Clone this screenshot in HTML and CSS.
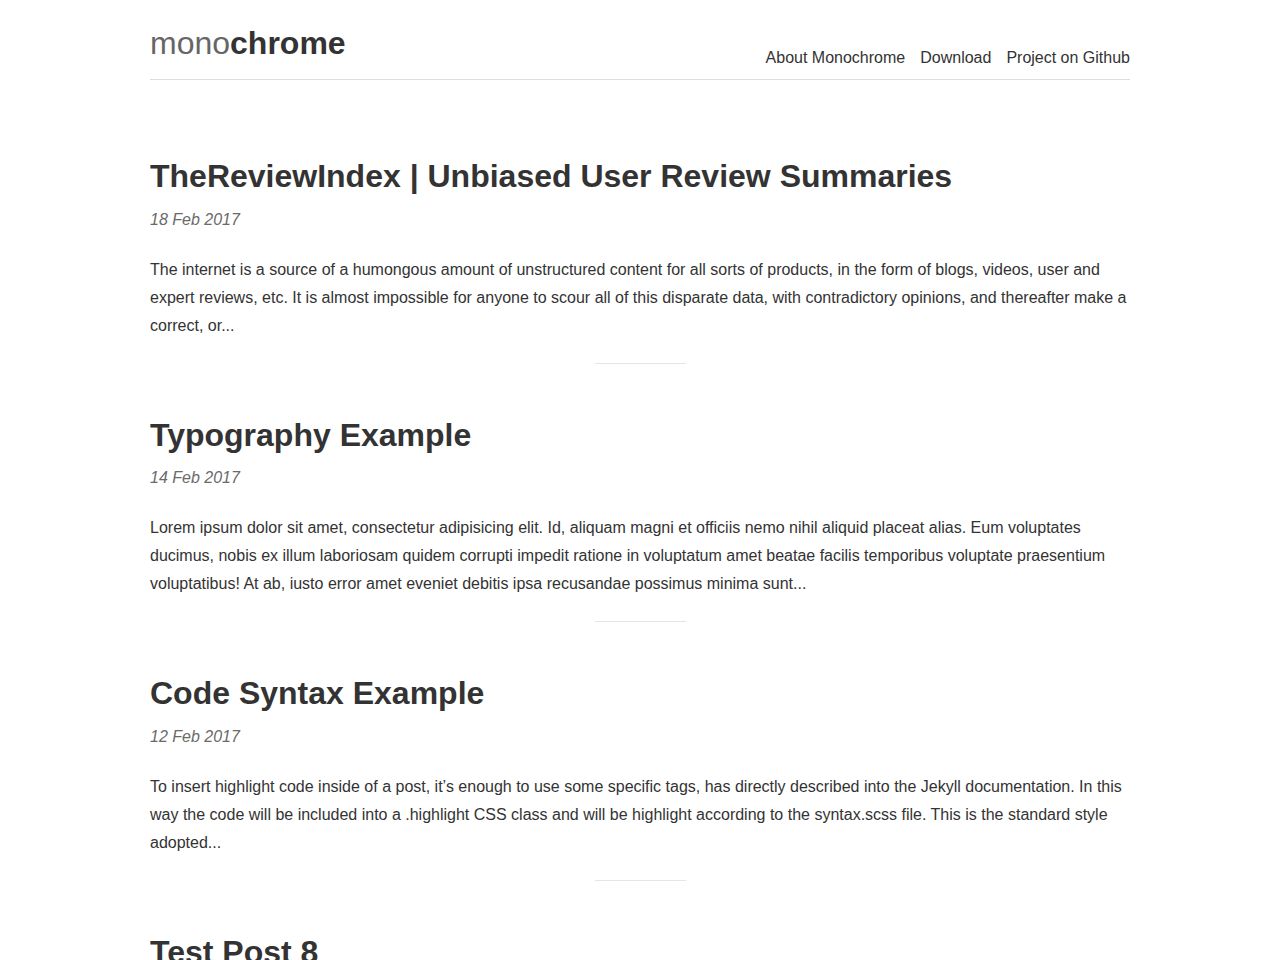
FILE: index.html
```html
<!DOCTYPE html>
<html lang="en">
<head>
<meta charset="utf-8">
<title>monochrome</title>
<link rel="stylesheet" href="styles.css">
</head>
<body>
<div class="wrap">
  <header class="site-header">
    <a class="logo" href="#"><span class="logo-light">mono</span><span class="logo-bold">chrome</span></a>
    <nav class="nav">
      <a href="#">About Monochrome</a>
      <a href="#">Download</a>
      <a href="#">Project on Github</a>
    </nav>
  </header>

  <main class="posts">
    <article class="post">
      <h1 class="post-title"><a href="#">TheReviewIndex | Unbiased User Review Summaries</a></h1>
      <div class="post-date">18 Feb 2017</div>
      <p class="post-excerpt">The internet is a source of a humongous amount of unstructured content for all sorts of products, in the form of blogs, videos, user and expert reviews, etc. It is almost impossible for anyone to scour all of this disparate data, with contradictory opinions, and thereafter make a correct, or...</p>
      <hr class="sep">
    </article>

    <article class="post">
      <h1 class="post-title"><a href="#">Typography Example</a></h1>
      <div class="post-date">14 Feb 2017</div>
      <p class="post-excerpt">Lorem ipsum dolor sit amet, consectetur adipisicing elit. Id, aliquam magni et officiis nemo nihil aliquid placeat alias. Eum voluptates ducimus, nobis ex illum laboriosam quidem corrupti impedit ratione in voluptatum amet beatae facilis temporibus voluptate praesentium voluptatibus! At ab, iusto error amet eveniet debitis ipsa recusandae possimus minima sunt...</p>
      <hr class="sep">
    </article>

    <article class="post">
      <h1 class="post-title"><a href="#">Code Syntax Example</a></h1>
      <div class="post-date">12 Feb 2017</div>
      <p class="post-excerpt">To insert highlight code inside of a post, it’s enough to use some specific tags, has directly described into the Jekyll documentation. In this way the code will be included into a .highlight CSS class and will be highlight according to the syntax.scss file. This is the standard style adopted...</p>
      <hr class="sep">
    </article>

    <article class="post">
      <h1 class="post-title"><a href="#">Test Post 8</a></h1>
      <div class="post-date">10 Feb 2017</div>
      <p class="post-excerpt">Lorem ipsum dolor sit amet, consectetur adipisicing elit. Id, aliquam magni et officiis nemo nihil aliquid placeat alias...</p>
      <hr class="sep">
    </article>
  </main>
</div>
</body>
</html>
```

FILE: styles.css
```css
html, body {
  margin: 0;
  padding: 0;
  background: #fff;
}

body {
  font-family: "Liberation Sans", Arial, Helvetica, sans-serif;
  font-size: 16px;
  line-height: 28px;
  color: #333;
}

a {
  color: inherit;
  text-decoration: none;
}

.wrap {
  width: 980px;
  margin: 0 auto;
}

.site-header {
  display: flex;
  justify-content: space-between;
  align-items: flex-end;
  padding: 23px 0 10px;
  border-bottom: 1px solid #ddd;
}

.logo {
  font-size: 32px;
  line-height: 40px;
  margin-bottom: 6px;
  color: #333;
}

.logo-light {
  color: #666;
  font-weight: normal;
}

.logo-bold {
  font-weight: bold;
}

.nav {
  display: flex;
  gap: 15px;
  line-height: 24px;
  font-size: 16px;
  margin-bottom: -1px;
}

.posts {
  padding-top: 76px;
}

.post-title {
  margin: 0;
  font-size: 32px;
  line-height: 40px;
  font-weight: bold;
  color: #333;
}

.post-date {
  margin-top: 11.5px;
  line-height: 24px;
  font-style: italic;
  color: #6a6a6a;
}

.post-excerpt {
  margin: 24px 0 0;
  line-height: 28px;
}

.sep {
  width: 91px;
  height: 0;
  margin: 23px auto 51px;
  border: 0;
  border-top: 1px solid #e5e5e5;
}
```
